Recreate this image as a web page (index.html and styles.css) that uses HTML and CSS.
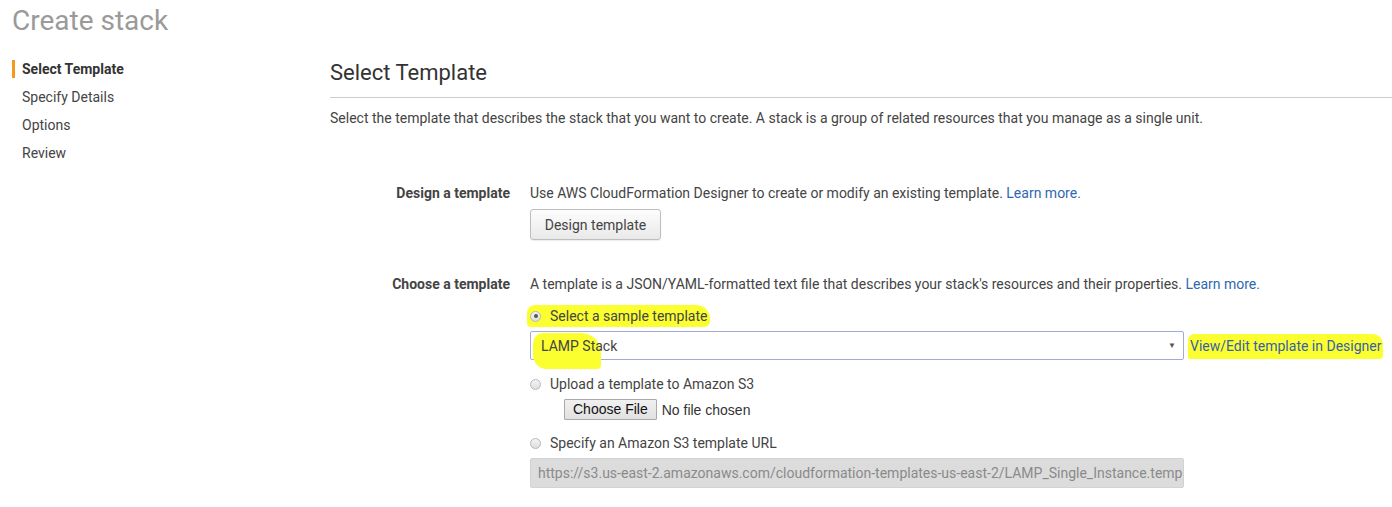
FILE: index.html
```html
<!DOCTYPE html>
<html lang="en">
<head>
    <meta charset="UTF-8">
    <title>Create stack</title>
    <link rel="stylesheet" href="styles.css">
</head>
<body>
    <div class="header">
        <h1>Create stack</h1>
    </div>

    <div class="wizard">
        <!-- Steps -->
        <ul class="steps">
            <li class="active">Select Template</li>
            <li>Specify Details</li>
            <li>Options</li>
            <li>Review</li>
        </ul>

        <!-- Main panel -->
        <div class="panel">
            <h2>Select Template</h2>
            <p class="intro">Select the template that describes the stack that you want to create. A stack is a group of related resources that you manage as a single unit.</p>

            <div class="form-row design">
                <div class="label">Design a template</div>
                <div class="field">
                    <div class="line">Use AWS CloudFormation Designer to create or modify an existing template. <a href="#">Learn more.</a></div>
                    <button class="btn">Design template</button>
                </div>
            </div>

            <div class="form-row">
                <div class="label">Choose a template</div>
                <div class="field">
                    <div class="line">A template is a JSON/YAML-formatted text file that describes your stack's resources and their properties. <a href="#">Learn more.</a></div>

                    <label class="option first hl"><span class="radio checked"></span>Select a sample template</label>
                    <div class="select-row">
                        <div class="select">
                            <span class="hl-mark"></span>
                            <span class="value">LAMP Stack</span>
                            <span class="arrow">&#9660;</span>
                        </div>
                        <a href="#" class="designer-link"><span class="hl">View/Edit template in Designer</span></a>
                    </div>

                    <label class="option"><span class="radio"></span>Upload a template to Amazon S3</label>
                    <div class="file-row">
                        <span class="file-btn">Choose File</span>
                        <span class="file-name">No file chosen</span>
                    </div>

                    <label class="option url"><span class="radio"></span>Specify an Amazon S3 template URL</label>
                    <div class="url-input">https://s3.us-east-2.amazonaws.com/cloudformation-templates-us-east-2/LAMP_Single_Instance.template</div>
                </div>
            </div>
        </div>
    </div>
</body>
</html>
```

FILE: styles.css
```css
body {
    font-family: Roboto, "Noto Sans", sans-serif;
    font-size: 14px;
    color: #444;
    background-color: #ffffff;
    margin: 0;
    padding: 0;
    overflow: hidden;
}

.header {
    padding: 3px 12px 0;
    height: 41px;
}

.header h1 {
    font-size: 28px;
    font-weight: 400;
    color: #9a9a9a;
    margin: 0;
    line-height: 36px;
}

.wizard {
    display: flex;
}

.steps {
    list-style: none;
    margin: 0;
    padding: 16px 0 0 12px;
    width: 318px;
}

.steps li {
    line-height: 18px;
    margin-bottom: 10px;
    padding-left: 7px;
    border-left: 3px solid transparent;
    color: #444;
}

.steps li.active {
    border-left-color: #f7981d;
    font-weight: bold;
    color: #333;
}

.panel {
    flex: 1;
    padding-top: 16px;
}

.panel h2 {
    font-size: 22px;
    font-weight: 400;
    color: #333;
    margin: 0;
    line-height: 26px;
    padding-bottom: 11px;
    border-bottom: 1px solid #cccccc;
}

.intro {
    margin: 11px 0 0;
    line-height: 18px;
}

.form-row {
    display: grid;
    grid-template-columns: 180px 1fr;
    column-gap: 20px;
    margin-top: 35px;
}

.form-row.design {
    margin-top: 57px;
}

.label {
    text-align: right;
    font-weight: bold;
    color: #444;
    line-height: 18px;
}

.line {
    line-height: 18px;
}

a {
    color: #3068b0;
    text-decoration: none;
}

.btn {
    display: block;
    margin-top: 7px;
    height: 31px;
    width: 131px;
    font-family: Roboto, sans-serif;
    font-size: 14px;
    color: #444;
    background: linear-gradient(#fdfdfd, #e9e9e9);
    border: 1px solid #bdbdbd;
    border-radius: 3px;
    box-shadow: 0 1px 1px rgba(0, 0, 0, 0.08);
}

.option {
    display: flex;
    align-items: center;
    line-height: 18px;
    margin-top: 15px;
    white-space: nowrap;
}

.option.first {
    margin-top: 12px;
}

.option.url {
    margin-top: 14px;
}

.hl {
    background-color: #fbff30;
}

.option.hl {
    width: fit-content;
    margin-left: -3px;
    padding: 2px 3px;
    border-radius: 8px 14px 6px 4px;
}

.radio {
    width: 11px;
    height: 11px;
    border-radius: 50%;
    border: 1px solid #b8b8b8;
    background: linear-gradient(#f4f4f4, #dedede);
    margin: 0 9px 0 0;
    box-sizing: border-box;
    position: relative;
    flex-shrink: 0;
}

.radio.checked::after {
    content: "";
    position: absolute;
    left: 2.5px;
    top: 2.5px;
    width: 4px;
    height: 4px;
    border-radius: 50%;
    background: #555;
}

.select-row {
    display: flex;
    align-items: center;
    margin-top: 4px;
}

.select {
    position: relative;
    width: 654px;
    height: 29px;
    box-sizing: border-box;
    border: 1px solid #a3aadb;
    border-radius: 2px;
    display: flex;
    align-items: center;
    padding: 0 10px;
    background: #fff;
    flex-shrink: 0;
}

.select .value {
    position: relative;
    flex: 1;
    color: #444;
}

.hl-mark {
    position: absolute;
    left: 2px;
    top: 1px;
    width: 68px;
    height: 36px;
    background: #fbff30;
    border-radius: 10px 20px 4px 14px;
}

.select .arrow {
    font-size: 8px;
    color: #555;
    margin-right: -3px;
}

.designer-link {
    margin-left: 4px;
    color: #3a5fa8;
    white-space: nowrap;
}

.designer-link .hl {
    padding: 4px 2px 5px;
    border-radius: 6px 10px 4px 2px;
}

.file-row {
    display: flex;
    align-items: center;
    margin: 6px 0 0 34px;
    font-family: "Liberation Sans", Arial, sans-serif;
    font-size: 14px;
}

.file-btn {
    height: 21px;
    box-sizing: border-box;
    line-height: 19px;
    padding: 0 8px;
    border: 1px solid #a9a9a9;
    border-radius: 1px;
    background: linear-gradient(#f0f0f0, #e1e1e1);
    color: #111;
}

.file-name {
    margin-left: 5px;
    color: #333;
}

.url-input {
    margin-top: 6px;
    width: 654px;
    height: 30px;
    box-sizing: border-box;
    line-height: 28px;
    padding-left: 7px;
    background: #dcdcdc;
    border: 1px solid #d2d2d2;
    border-radius: 2px;
    color: #8a8a8a;
    white-space: nowrap;
    overflow: hidden;
}
```
